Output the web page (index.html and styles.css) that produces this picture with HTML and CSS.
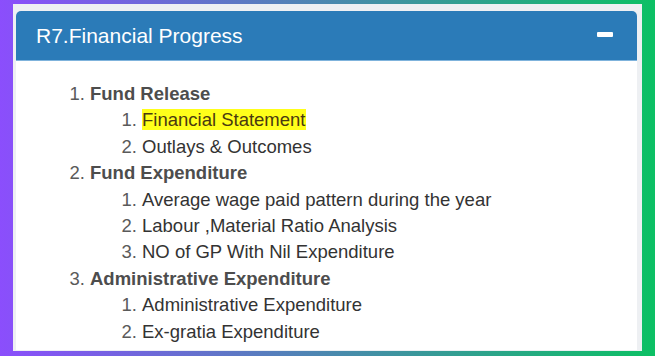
FILE: index.html
```html
<!DOCTYPE html>
<html>
<head>
<meta charset="utf-8">
<link rel="stylesheet" href="styles.css">
</head>
<body>
<div class="frame">
  <div class="card">
    <div class="card-header">
      <h3 class="card-title">R7.Financial Progress</h3>
      <span class="collapse-btn" aria-label="collapse"></span>
    </div>
    <div class="card-body">
      <ol class="main-list">
        <li><b>Fund Release</b>
          <ol class="sub-list">
            <li><span class="mark">Financial Statement</span></li>
            <li>Outlays &amp; Outcomes</li>
          </ol>
        </li>
        <li><b>Fund Expenditure</b>
          <ol class="sub-list">
            <li>Average wage paid pattern during the year</li>
            <li>Labour ,Material Ratio Analysis</li>
            <li>NO of GP With Nil Expenditure</li>
          </ol>
        </li>
        <li><b>Administrative Expenditure</b>
          <ol class="sub-list">
            <li>Administrative Expenditure</li>
            <li>Ex-gratia Expenditure</li>
          </ol>
        </li>
      </ol>
    </div>
  </div>
</div>
</body>
</html>
```

FILE: styles.css
```css
html, body {
  margin: 0;
  height: 356px;
  overflow: hidden;
}
body {
  box-sizing: border-box;
  width: 655px;
  padding: 4px 13px 5px 13px;
  background: linear-gradient(90deg, #8b4efc 0%, #4b88af 50%, #0cc064 100%);
  font-family: "Liberation Sans", Arial, sans-serif;
}
.frame {
  box-sizing: border-box;
  height: 347px;
  background: #eef0f3;
  padding: 7px 5px 1px 3px;
}
.card {
  height: 100%;
  box-sizing: border-box;
  background: #fff;
  border-radius: 5px 5px 0 0;
  overflow: hidden;
  display: flex;
  flex-direction: column;
}
.card-header {
  flex: none;
  height: 50px;
  box-sizing: border-box;
  background: #2b7bb8;
  border-bottom: 1px solid #7fb3dc;
  display: flex;
  align-items: center;
  justify-content: space-between;
  padding: 0 24px 0 20px;
}
.card-title {
  margin: 0;
  color: #fff;
  font-weight: normal;
  font-size: 21px;
  line-height: 26px;
}
.collapse-btn {
  width: 16px;
  height: 5px;
  background: #fff;
  border-radius: 1px;
  margin-top: -3px;
}
.card-body {
  flex: 1;
  padding: 20px 20px 0 20px;
  color: #333;
  font-size: 18.5px;
  line-height: 26.4px;
}
.main-list {
  margin: 0;
  padding-left: 54px;
}
.main-list li::marker {
  color: #5a5a5a;
}
.main-list b {
  color: #4d4d4d;
}
.sub-list {
  margin: 0;
  padding-left: 52px;
}
.sub-list li {
  color: #333;
}
.mark {
  background: #ffff1a;
  color: #4a3a10;
}
```
